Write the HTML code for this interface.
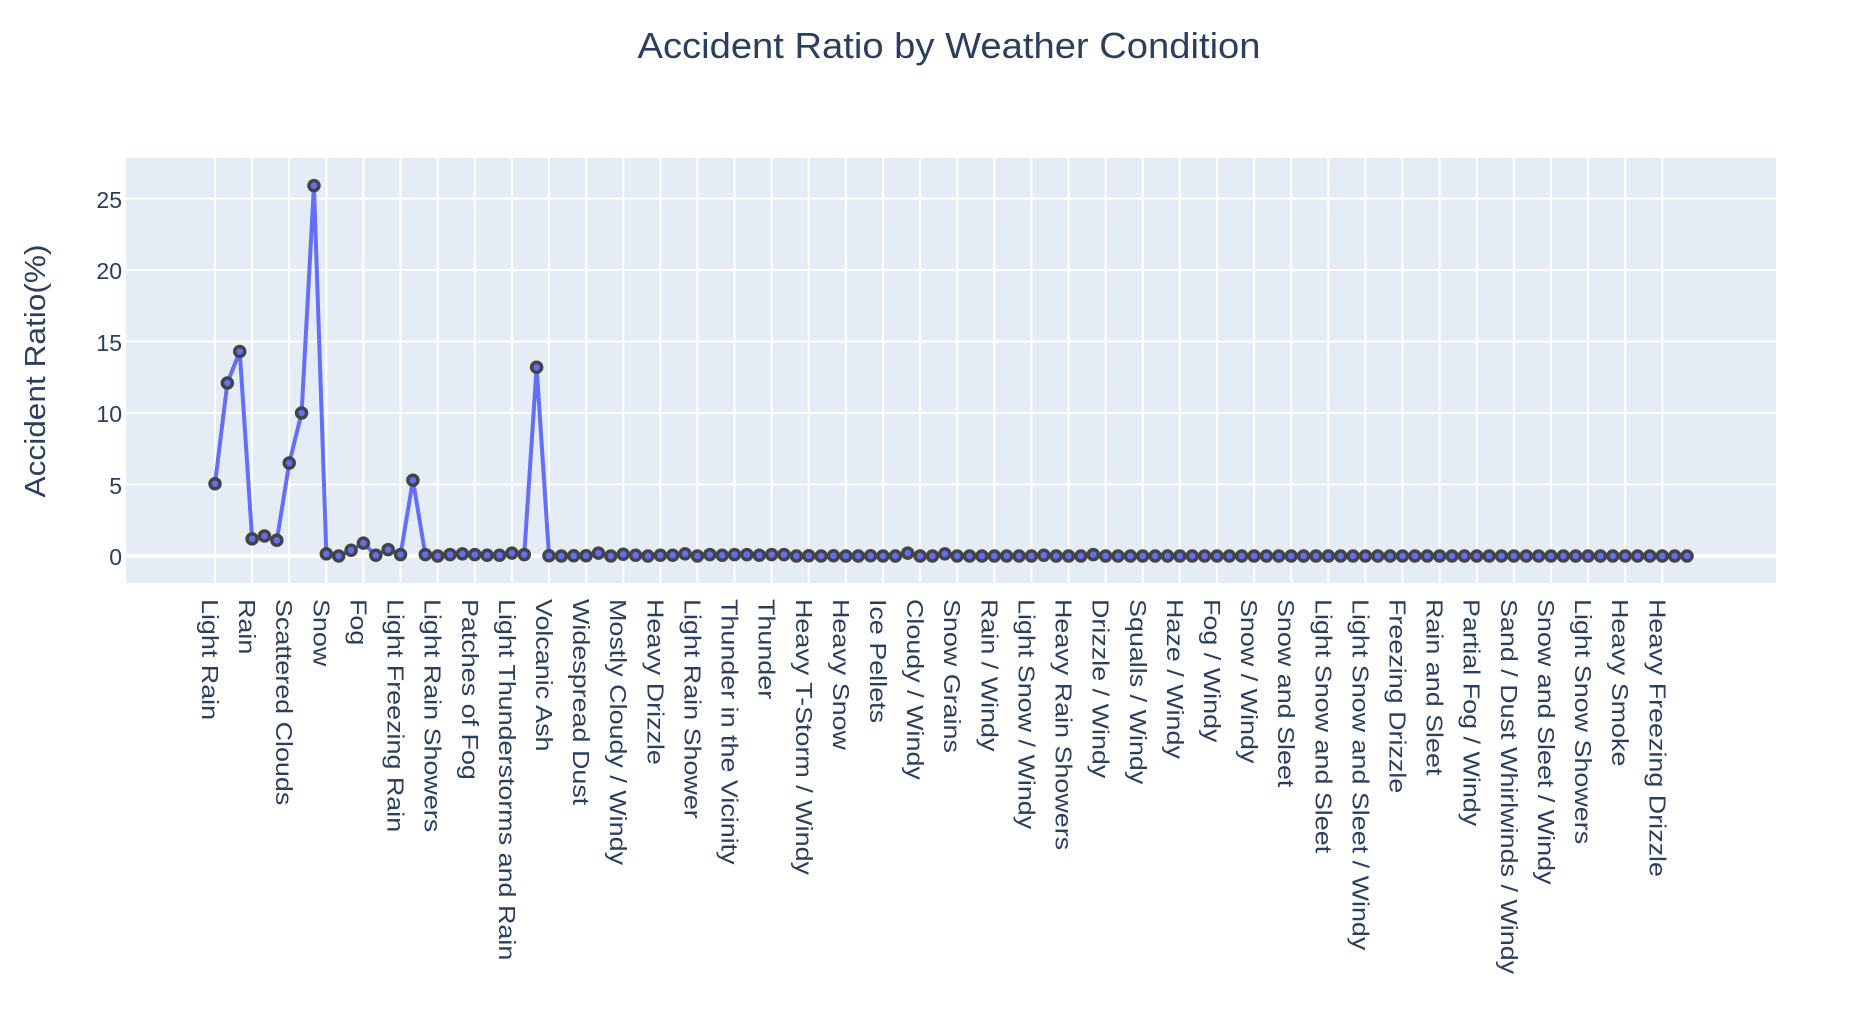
<!DOCTYPE html>
<html><head><meta charset="utf-8"><style>
html,body{margin:0;padding:0;background:#fff;width:1858px;height:1018px;overflow:hidden}
svg{display:block}
text{font-family:"Liberation Sans","DejaVu Sans",sans-serif;fill:#2a3f5f}
.xl{font-size:23px}
.yl{font-size:23px}
</style></head><body>
<svg id="s" width="1858" height="1018" xmlns="http://www.w3.org/2000/svg">
<rect x="126" y="158" width="1650" height="425" fill="#e5ecf6"/>
<g id="grid" stroke="#fff" stroke-width="2"></g>
<line x1="126" x2="1776" y1="556" y2="556" stroke="#fff" stroke-width="4"/>
<polyline id="ln" fill="none" stroke="#636efa" stroke-width="4" stroke-linejoin="round"/>
<g id="pts" fill="#636efa" stroke="#444" stroke-width="3.5"></g>
<text x="949" y="58" text-anchor="middle" font-size="36" textLength="623" lengthAdjust="spacingAndGlyphs">Accident Ratio by Weather Condition</text>
<text transform="translate(45,371) rotate(-90)" text-anchor="middle" font-size="29" textLength="253" lengthAdjust="spacingAndGlyphs">Accident Ratio(%)</text>
<g class="yl" text-anchor="end">
<text x="122" y="565">0</text>
<text x="122" y="494">5</text>
<text x="122" y="422">10</text>
<text x="122" y="351">15</text>
<text x="122" y="279">20</text>
<text x="122" y="208">25</text>
</g>
<g id="xl" class="xl">
<text>Light Rain</text><text>Rain</text><text>Scattered Clouds</text><text>Snow</text><text>Fog</text><text>Light Freezing Rain</text><text>Light Rain Showers</text><text>Patches of Fog</text><text>Light Thunderstorms and Rain</text><text>Volcanic Ash</text><text>Widespread Dust</text><text>Mostly Cloudy / Windy</text><text>Heavy Drizzle</text><text>Light Rain Shower</text><text>Thunder in the Vicinity</text><text>Thunder</text><text>Heavy T-Storm / Windy</text><text>Heavy Snow</text><text>Ice Pellets</text><text>Cloudy / Windy</text><text>Snow Grains</text><text>Rain / Windy</text><text>Light Snow / Windy</text><text>Heavy Rain Showers</text><text>Drizzle / Windy</text><text>Squalls / Windy</text><text>Haze / Windy</text><text>Fog / Windy</text><text>Snow / Windy</text><text>Snow and Sleet</text><text>Light Snow and Sleet</text><text>Light Snow and Sleet / Windy</text><text>Freezing Drizzle</text><text>Rain and Sleet</text><text>Partial Fog / Windy</text><text>Sand / Dust Whirlwinds / Windy</text><text>Snow and Sleet / Windy</text><text>Light Snow Showers</text><text>Heavy Smoke</text><text>Heavy Freezing Drizzle</text>
</g>
</svg>
<script>
var NS="http://www.w3.org/2000/svg";
var x0=215,dx=12.37;
function Y(v){return 556-v*14.3;}
var g=document.getElementById('grid');
[5,10,15,20,25].forEach(function(v){var l=document.createElementNS(NS,'line');l.setAttribute('x1',126);l.setAttribute('x2',1776);l.setAttribute('y1',Y(v));l.setAttribute('y2',Y(v));g.appendChild(l);});
for(var i=0;i<40;i++){var x=x0+i*3*dx;var l=document.createElementNS(NS,'line');l.setAttribute('x1',x);l.setAttribute('x2',x);l.setAttribute('y1',158);l.setAttribute('y2',583);g.appendChild(l);}
var t=document.getElementById('xl').children;
for(var i=0;i<t.length;i++){var x=x0+i*3*dx-13;t[i].setAttribute('transform','translate('+x+',599) rotate(90) scale(1.17,1)');}
var v=[5.05,12.1,14.3,1.2,1.4,1.1,6.5,10.0,25.9,0.15,0.0,0.4,0.9,0.05,0.45,0.1,5.3,0.1,0.0,0.1,0.15,0.1,0.05,0.05,0.2,0.1,13.2,
0.02,0.0,0.02,0.02,0.2,0.0,0.12,0.05,0.0,0.05,0.05,0.15,0.0,0.1,0.05,0.1,0.1,0.05,0.1,0.1,0.0,0.02,0.0,0.02,0.0,0.0,0.02,0.0,0.0,0.2];
while(v.length<120)v.push(0);
v[59]=0.15;v[71]=0.1;v[67]=0.05;
var pts=[],pg=document.getElementById('pts');
for(var i=0;i<120;i++){var x=x0+i*dx,y=Y(v[i]);pts.push(x+','+y);var c=document.createElementNS(NS,'circle');c.setAttribute('cx',x);c.setAttribute('cy',y);c.setAttribute('r',5);pg.appendChild(c);}
document.getElementById('ln').setAttribute('points',pts.join(' '));
</script>
</body></html>
